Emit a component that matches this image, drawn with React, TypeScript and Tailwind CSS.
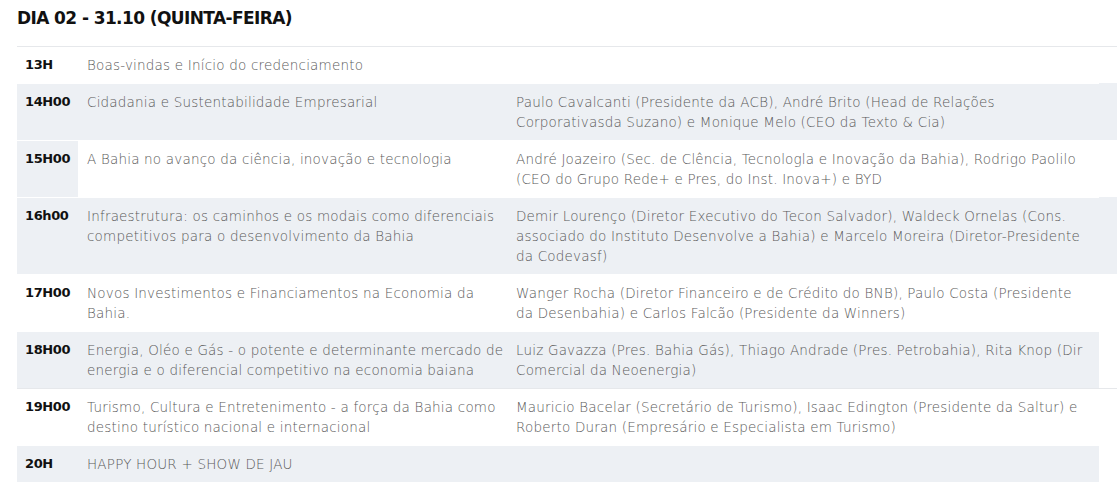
import React from 'react';

type Row = {
  time: string;
  topic: string;
  speakers?: string;
  bg: 'white' | 'gray' | 'split';
  // gray band reaches the right edge of the window
  wide?: boolean;
  line?: boolean;
};

const rows: Row[] = [
  { time: '13H', topic: 'Boas-vindas e Início do credenciamento', bg: 'white', line: true },
  {
    time: '14H00',
    topic: 'Cidadania e Sustentabilidade Empresarial',
    speakers:
      'Paulo Cavalcanti (Presidente da ACB), André Brito (Head de Relações Corporativasda Suzano) e Monique Melo (CEO da Texto & Cia)',
    bg: 'gray',
    wide: true,
  },
  {
    time: '15H00',
    topic: 'A Bahia no avanço da ciência, inovação e tecnologia',
    speakers:
      'André Joazeiro (Sec. de Clência, Tecnologla e Inovação da Bahia), Rodrigo Paolilo (CEO do Grupo Rede+ e Pres, do Inst. Inova+) e BYD',
    bg: 'split',
  },
  {
    time: '16h00',
    topic: 'Infraestrutura: os caminhos e os modais como diferenciais competitivos para o desenvolvimento da Bahia',
    speakers:
      'Demir Lourenço (Diretor Executivo do Tecon Salvador), Waldeck Ornelas (Cons. associado do Instituto Desenvolve a Bahia) e Marcelo Moreira (Diretor-Presidente da Codevasf)',
    bg: 'gray',
    wide: true,
  },
  {
    time: '17H00',
    topic: 'Novos Investimentos e Financiamentos na Economia da Bahia.',
    speakers:
      'Wanger Rocha (Diretor Financeiro e de Crédito do BNB), Paulo Costa (Presidente da Desenbahia) e Carlos Falcão (Presidente da Winners)',
    bg: 'white',
  },
  {
    time: '18H00',
    topic: 'Energia, Oléo e Gás - o potente e determinante mercado de energia e o diferencial competitivo na economia baiana',
    speakers:
      'Luiz Gavazza (Pres. Bahia Gás), Thiago Andrade (Pres. Petrobahia), Rita Knop (Dir Comercial da Neoenergia)',
    bg: 'gray',
  },
  {
    time: '19H00',
    topic: 'Turismo, Cultura e Entretenimento - a força da Bahia como destino turístico nacional e internacional',
    speakers:
      'Mauricio Bacelar (Secretário de Turismo), Isaac Edington (Presidente da Saltur) e Roberto Duran (Empresário e Especialista em Turismo)',
    bg: 'white',
    line: true,
  },
  { time: '20H', topic: 'HAPPY HOUR + SHOW DE JAU', bg: 'gray' },
];

const ScheduleRow = ({ row }: { row: Row }) => {
  const cellBg = row.bg === 'gray' ? 'bg-[#edf0f4]' : 'bg-white';
  const timeBg = row.bg === 'white' ? 'bg-white' : 'bg-[#edf0f4]';
  const tailBg = row.bg === 'gray' && row.wide ? 'bg-[#edf0f4]' : 'bg-white';
  const border = row.line ? 'border-t border-[#e6e8eb]' : 'border-t border-transparent';

  return (
    <div className="flex">
      <div className={`grid grid-cols-[61px_429px_592px] w-[1082px] ${border}`}>
        <div className={`${timeBg} pl-2 py-2 font-bold text-[13px] tracking-[-0.4px] text-[#111111]`}>
          {row.time}
        </div>
        <div className={`${cellBg} pl-[9px] py-2`}>{row.topic}</div>
        <div className={`${cellBg} pl-[9px] pr-2 py-2`}>{row.speakers}</div>
      </div>
      <div className={`flex-1 ${tailBg} ${border}`} />
    </div>
  );
};

export default function App() {
  return (
    <div className="min-h-screen bg-white pl-[17px] font-['DejaVu_Sans',sans-serif] text-[13.5px] leading-5 tracking-[0.2px] font-extralight text-[#5a5a5a]">
      <h2 className="h-[46px] pt-[6px] text-[17px] leading-6 font-bold tracking-[-0.6px] text-[#111111]">
        DIA 02 - 31.10 (QUINTA-FEIRA)
      </h2>
      <div>
        {rows.map((row) => (
          <ScheduleRow key={row.time} row={row} />
        ))}
      </div>
    </div>
  );
}
